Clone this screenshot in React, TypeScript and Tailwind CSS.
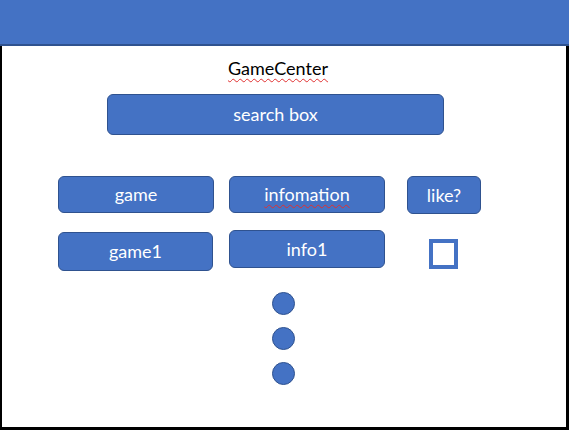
export default function App() {
  const btn =
    "flex items-center justify-center rounded-[6px] border border-[#2f528f] bg-[#4472c4] text-white text-[18px]";

  return (
    <div
      className="flex h-[430px] w-[569px] flex-col bg-white"
      style={{ fontFamily: "Lato, 'Open Sans', sans-serif" }}
    >
      {/* Top bar */}
      <div className="h-[46px] w-full shrink-0 border-b-2 border-[#2f528f] bg-[#4472c4]" />

      {/* Canvas */}
      <div className="flex flex-1 flex-col border-b-[3px] border-l-2 border-r-[3px] border-black">
        <div className="mt-[10px] flex justify-center pr-[12px]">
          <span className="text-[18px] leading-[24px] text-black underline decoration-[#e03030] decoration-wavy decoration-1 underline-offset-[3px]">
            GameCenter
          </span>
        </div>

        <div className={`${btn} ml-[105px] mt-[14px] h-[41px] w-[337px]`}>search box</div>

        {/* Buttons */}
        <div className="ml-[56px] mt-[41px] flex items-start">
          <div className={`${btn} h-[37px] w-[156px]`}>game</div>
          <div className={`${btn} ml-[15px] h-[37px] w-[156px]`}>
            <span className="underline decoration-[#e03030] decoration-wavy decoration-1 underline-offset-[3px]">
              infomation
            </span>
          </div>
          <div className={`${btn} ml-[22px] h-[38px] w-[74px]`}>like?</div>
        </div>

        <div className="ml-[56px] mt-[16px] flex items-start">
          <div className={`${btn} mt-[2px] h-[39px] w-[155px]`}>game1</div>
          <div className={`${btn} ml-[16px] h-[38px] w-[156px]`}>info1</div>
          <div className="ml-[44px] mt-[9px] h-[30px] w-[29px] border-4 border-[#4472c4] bg-white" />
        </div>

        {/* Dots */}
        <div className="ml-[270px] mt-[21px] flex flex-col gap-3">
          <div className="h-[23px] w-[23px] rounded-full border border-[#2f528f] bg-[#4472c4]" />
          <div className="h-[23px] w-[23px] rounded-full border border-[#2f528f] bg-[#4472c4]" />
          <div className="h-[23px] w-[23px] rounded-full border border-[#2f528f] bg-[#4472c4]" />
        </div>
      </div>
    </div>
  );
}
